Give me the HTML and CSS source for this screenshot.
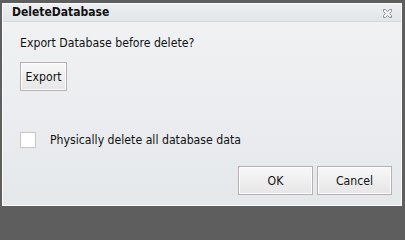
FILE: index.html
```html
<!DOCTYPE html>
<html>
<head>
<meta charset="utf-8">
<link rel="stylesheet" href="styles.css">
</head>
<body>
<div class="dialog">
  <div class="titlebar">
    <span class="title">DeleteDatabase</span>
    <svg class="close" width="9" height="9" viewBox="0 0 9 9">
      <path d="M0.5 0.5 H2.5 L4.5 2.5 L6.5 0.5 H8.5 V2.5 L6.5 4.5 L8.5 6.5 V8.5 H6.5 L4.5 6.5 L2.5 8.5 H0.5 V6.5 L2.5 4.5 L0.5 2.5 Z" fill="#f2f3f5" stroke="#8f9294" stroke-width="1"/>
    </svg>
  </div>
  <div class="content">
    <div class="question">Export Database before delete?</div>
    <button class="btn export">Export</button>
    <label class="check-row">
      <span class="checkbox"></span>
      <span class="check-label">Physically delete all database data</span>
    </label>
    <div class="footer">
      <button class="btn wide">OK</button>
      <button class="btn wide">Cancel</button>
    </div>
  </div>
</div>
</body>
</html>
```

FILE: styles.css
```css
html, body {
  margin: 0;
  padding: 0;
}
html {
  background: #5e5e5e;
}
body {
  width: 405px;
  height: 209px;
  overflow: hidden;
  font-family: "DejaVu Sans Condensed", "DejaVu Sans", sans-serif;
  font-size: 12.2px;
  color: #111;
}
.dialog {
  box-sizing: border-box;
  margin: 3px 3px 0 2px;
  width: 400px;
  height: 203px;
  border: 1px solid #fbfbfb;
  background: linear-gradient(#f1f2f4, #e5e8eb);
  display: flex;
  flex-direction: column;
}
.titlebar {
  height: 17px;
  border-bottom: 1px solid #d7dadd;
  background: linear-gradient(#eceef0, #e3e6e9);
  display: flex;
  align-items: center;
  justify-content: space-between;
  padding: 0 9px 0 9px;
}
.title {
  font-weight: bold;
  font-size: 12px;
  line-height: 17px;
  color: #111;
}
.close {
  display: block;
  margin-top: 1px;
}
.content {
  flex: 1;
  display: flex;
  flex-direction: column;
  align-items: flex-start;
  padding: 14px 9px 10px 17px;
}
.question {
  line-height: 15px;
}
.btn {
  box-sizing: border-box;
  height: 29px;
  border: 1px solid #b9aeb1;
  box-shadow: inset 0 0 0 1px #fdfdfd;
  background: linear-gradient(#f7f7f7, #e6e6e6);
  font-family: "DejaVu Sans Condensed", "DejaVu Sans", sans-serif;
  font-size: 12.2px;
  color: #111;
  padding: 0;
  margin: 0;
}
.export {
  width: 47px;
  margin-top: 11px;
}
.check-row {
  display: flex;
  align-items: center;
  margin-top: 41px;
  gap: 14px;
}
.checkbox {
  box-sizing: border-box;
  width: 16px;
  height: 16px;
  border: 1px solid #c6c6c6;
  background: #fff;
}
.check-label {
  line-height: 16px;
}
.footer {
  margin-top: auto;
  align-self: flex-end;
  display: flex;
  gap: 4px;
}
.wide {
  width: 75px;
}
```
